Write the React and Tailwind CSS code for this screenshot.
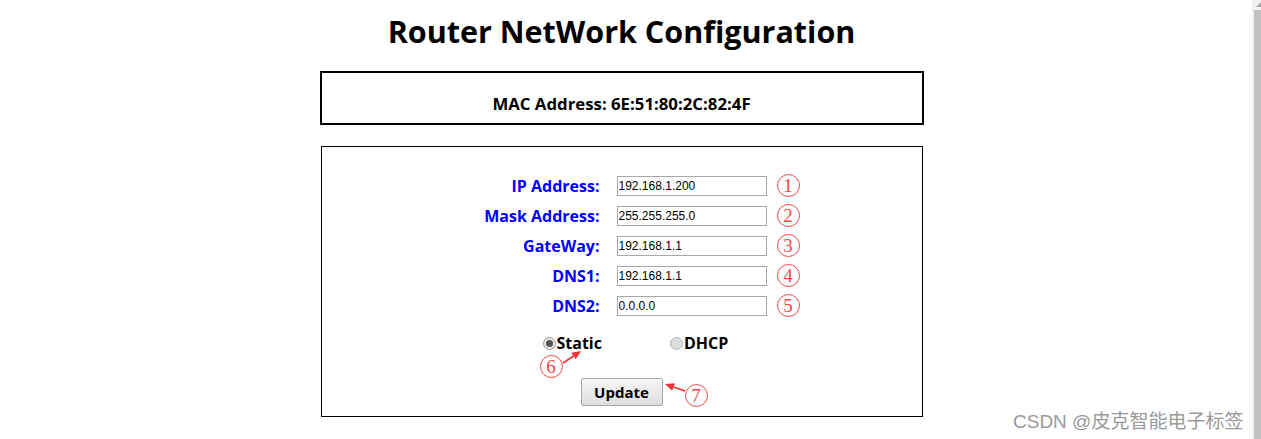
import React, { useState } from "react";

const fields = [
  { label: "IP Address:", value: "192.168.1.200", n: "1" },
  { label: "Mask Address:", value: "255.255.255.0", n: "2" },
  { label: "GateWay:", value: "192.168.1.1", n: "3" },
  { label: "DNS1:", value: "192.168.1.1", n: "4" },
  { label: "DNS2:", value: "0.0.0.0", n: "5" },
];

const sans = "font-['Open_Sans','Noto_Sans',sans-serif]";

function Circled({ n }) {
  return (
    <span className="inline-flex items-center justify-center w-[23px] h-[23px] rounded-full border border-[#f04848] text-[#f04848] font-['Liberation_Serif',serif] text-[19px] leading-none">
      {n}
    </span>
  );
}

function Radio({ checked }) {
  return (
    <span
      className={
        "inline-flex items-center justify-center w-[13px] h-[13px] rounded-full border " +
        (checked ? "border-[#9a9a9a] bg-[#e6e6e6]" : "border-[#b5b5b5] bg-[#dcdcdc]")
      }
    >
      {checked && <span className="w-[7px] h-[7px] rounded-full bg-[#555]" />}
    </span>
  );
}

function Arrow({ x1, y1, x2, y2 }) {
  const ang = Math.atan2(y2 - y1, x2 - x1);
  const len = 9;
  const w = 4;
  const bx = x2 - len * Math.cos(ang);
  const by = y2 - len * Math.sin(ang);
  const px = -Math.sin(ang) * w;
  const py = Math.cos(ang) * w;
  return (
    <g>
      <line x1={x1} y1={y1} x2={bx} y2={by} stroke="#ee3333" strokeWidth="1.6" />
      <polygon points={`${x2},${y2} ${bx + px},${by + py} ${bx - px},${by - py}`} fill="#ee3333" />
    </g>
  );
}

export default function App() {
  const [mode, setMode] = useState("static");

  return (
    <div className={"relative flex w-[1261px] h-[439px] overflow-hidden bg-white text-black " + sans}>
      <div className="w-[1243px] flex flex-col items-center">
        <h1 className="mt-[10px] text-[30.5px] leading-[42px] font-bold">Router NetWork Configuration</h1>

        <div className="mt-[19px] w-[604px] h-[54px] border-2 border-black flex items-center justify-center pt-[11px]">
          <span className="text-[16.8px] font-bold">MAC Address: 6E:51:80:2C:82:4F</span>
        </div>

        <div className="relative mt-[21px] w-[602px] h-[271px] border border-black pt-[29px]">
          <div className="flex flex-col gap-[10px]">
            {fields.map((f) => (
              <div key={f.label} className="flex items-center h-[20px]">
                <label className="w-[278px] text-right text-[16px] font-bold text-[#0000ff]">{f.label}</label>
                <input
                  defaultValue={f.value}
                  className="ml-[17px] w-[150px] h-[20px] border border-[#a9a9a9] px-[1px] text-[12px] font-['Liberation_Sans',Arial,sans-serif] outline-none"
                />
                <span className="ml-[10px]">
                  <Circled n={f.n} />
                </span>
              </div>
            ))}
          </div>

          <div className="mt-[17px] flex items-center h-[20px]">
            <button onClick={() => setMode("static")} className="ml-[221px] flex items-center">
              <Radio checked={mode === "static"} />
              <span className="ml-[1px] text-[16px] font-bold">Static</span>
            </button>
            <button onClick={() => setMode("dhcp")} className="ml-[68px] flex items-center">
              <Radio checked={mode === "dhcp"} />
              <span className="ml-[1px] text-[16px] font-bold">DHCP</span>
            </button>
          </div>

          <div className="mt-[25px] flex justify-center">
            <button className="w-[82px] h-[28px] border border-[#a8a8a8] rounded-[2px] bg-gradient-to-b from-[#f6f6f6] to-[#dedede] text-[15px] font-bold">
              Update
            </button>
          </div>

          {/* annotations */}
          <span className="absolute left-[218px] top-[208px]">
            <Circled n="6" />
          </span>
          <span className="absolute left-[363px] top-[237px]">
            <Circled n="7" />
          </span>
          <svg className="absolute left-0 top-0 pointer-events-none" width="602" height="271">
            <Arrow x1={241} y1={216} x2={259} y2={204} />
            <Arrow x1={363} y1={244} x2={343} y2={237} />
          </svg>
        </div>
      </div>

      <div className="ml-auto w-[9px] h-full bg-[#f1f1f1] flex flex-col items-end">
        <svg width="7" height="8" className="mt-[1px]">
          <polygon points="7,1 7,6 2,6" fill="#a3a3a3" />
        </svg>
        <div className="mt-[1px] w-[7px] flex-1 bg-[#c1c1c1]" />
      </div>

      <div className="absolute left-[1013px] top-[408px] text-[19px] text-[#9a9a9a] font-['Liberation_Sans','Noto_Sans_CJK_SC',sans-serif]">
        CSDN @皮克智能电子标签
      </div>
    </div>
  );
}
